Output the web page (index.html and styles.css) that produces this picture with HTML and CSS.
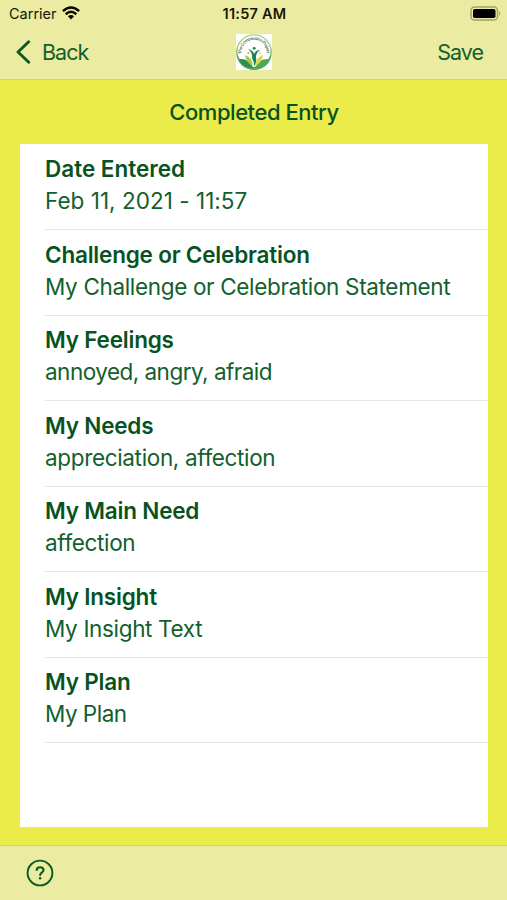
FILE: index.html
```html
<!DOCTYPE html>
<html lang="en">
<head>
<meta charset="utf-8">
<title>Completed Entry</title>
<link rel="stylesheet" href="styles.css">
</head>
<body>
<div class="screen">
  <header class="top">
    <div class="status">
      <div class="carrier"><span>Carrier</span>
        <svg class="wifi" width="18" height="14" viewBox="0 0 18 14"><g fill="none" stroke="#080800" stroke-width="2.5"><path d="M.9 5.1Q9-2.1 17.1 5.1"/><path d="M3.7 8.2Q9 3.4 14.3 8.2"/></g><path d="M5.9 10.2Q9 7.7 12.1 10.2L9 13.5Z" fill="#080800"/></svg>
      </div>
      <div class="time">11:57 AM</div>
      <svg class="battery" width="32" height="15" viewBox="0 0 32 15"><rect x="1" y="1" width="26.5" height="13" rx="3.6" fill="none" stroke="#a3a26e" stroke-width="1.5"/><rect x="3" y="3" width="22.5" height="9" rx="1.8" fill="#000"/><path d="M29 5Q31.5 7.5 29 10Z" fill="#a3a26e"/></svg>
    </div>
    <nav class="nav">
      <div class="back"><svg width="16" height="24" viewBox="0 0 16 24"><path d="M13.7 1.7 3 12l10.7 10.3" fill="none" stroke="#0b5a22" stroke-width="2.9" stroke-linecap="round" stroke-linejoin="round"/></svg><span>Back</span></div>
      <svg class="logo" width="36" height="36" viewBox="0 0 36 36">
        <defs><linearGradient id="ring" x2="0" y2="1"><stop stop-color="#a8d56e"/><stop offset=".6" stop-color="#72b968"/><stop offset="1" stop-color="#18864f"/></linearGradient><path id="arc" d="M5.5 20A12.6 12.6 0 1 1 30.5 20"/></defs>
        <path fill="#fff" d="M0 0h36v36H0z"/>
        <circle cx="18" cy="18" r="17.2" fill="none" stroke="url(#ring)" stroke-width="1.3"/>
        <text class="logo-text"><textPath href="#arc" textLength="42">The Compassion Project</textPath></text>
        <path d="M1 20Q5 31 18 33Q31 31 35 20Q34 35 18 35.5Q2 35 1 20Z" fill="#55a763"/>
        <path d="M3 25Q13 24 17 34Q6 34 3 25Z" fill="#2d8d55"/><path d="M33 25Q23 24 19 34Q30 34 33 25Z" fill="#53a552"/>
        <path d="M9 21Q16 23 17 32Q10 29 9 21Z" fill="#a5ce48"/><path d="M27 21Q20 23 19 32Q26 29 27 21Z" fill="#d6dc50"/>
        <path d="M12 15Q17 16 18 20Q20 16 24 16Q20 19 20 23Q21 29 18 32Q18 27 16 24Q17 19 12 15Z" fill="#178451"/>
        <circle cx="18.2" cy="14.3" r="1.4" fill="#178451"/><circle cx="12.5" cy="19" r="1.1" fill="#8fc454"/><circle cx="24" cy="19" r="1.1" fill="#d6dc50"/>
      </svg>
      <div class="save">Save</div>
    </nav>
  </header>
  <main>
    <h1>Completed Entry</h1>
    <div class="card">
      <section><h2 class="wide">Date Entered</h2><p class="date">Feb 11, 2021 - 11:57</p></section>
      <section><h2>Challenge or Celebration</h2><p>My Challenge or Celebration Statement</p></section>
      <section><h2>My Feelings</h2><p class="tight">annoyed, angry, afraid</p></section>
      <section><h2>My Needs</h2><p>appreciation, affection</p></section>
      <section><h2>My Main Need</h2><p>affection</p></section>
      <section><h2>My Insight</h2><p>My Insight Text</p></section>
      <section><h2>My Plan</h2><p class="tight">My Plan</p></section>
    </div>
  </main>
  <footer><svg width="28" height="28" viewBox="0 0 28 28"><circle cx="14" cy="14" r="12.4" fill="none" stroke="#0b5a22" stroke-width="1.9"/><path d="M10.7 11C10.8 9.1 12 8.3 14 8.3c2 0 3.5 1.1 3.5 2.8 0 2.5-3.3 2.4-3.3 4.8" fill="none" stroke="#0b5a22" stroke-width="2.1" stroke-linecap="round"/><circle cx="14.1" cy="19.2" r="1.3" fill="#0b5a22"/></svg></footer>
</div>
</body>
</html>
```

FILE: styles.css
```css
* { box-sizing: border-box; margin: 0; padding: 0; }
body { font-family: Inter, "Liberation Sans", sans-serif; color: #07531f; }
svg { display: block; flex: none; }
.screen { width: 507px; height: 900px; display: flex; flex-direction: column; background: #ebeb4a; overflow: hidden; }
.top { height: 80px; background: #ebeba2; border-bottom: 1px solid #d3d477; }
.status { height: 27px; display: grid; grid-template-columns: 1fr auto 1fr; align-items: center; padding: 0 5px 0 9px; color: #181808; font-size: 14.5px; }
.carrier { display: flex; align-items: center; gap: 6px; letter-spacing: 0; }
.wifi { margin: -2px 0 0 -1px; }
.time { font-weight: 600; letter-spacing: .25px; padding-right: 2px; }
.battery { justify-self: end; }
.nav { height: 50px; display: grid; grid-template-columns: 1fr 36px 1fr; align-items: center; padding: 0 25px 0 15px; font-size: 21.5px; letter-spacing: -1px; color: #12602d; }
.back { display: flex; align-items: center; gap: 11px; }
.logo { margin-left: 5px; }
.logo-text { font-size: 4.3px; font-weight: 600; fill: #526f65; letter-spacing: 0; }
.save { text-align: right; margin-right: -1px; }
main { height: 766px; padding: 0 19px 0 20px; }
h1 { height: 64px; line-height: 64px; text-align: center; font-size: 22px; font-weight: 500; letter-spacing: -.45px; }
.card { height: 683px; background: #fff; padding: 1px 0 0 25px; }
section { height: 85.5px; padding-top: 8.5px; border-bottom: 1px solid #e6e6e8; line-height: 32px; }
h2 { font-size: 22.5px; font-weight: 600; letter-spacing: -.2px; }
h2.wide { letter-spacing: 0; }
p { font-size: 22.5px; letter-spacing: -.34px; color: #12602d; }
p.date { letter-spacing: .03px; }
p.tight { letter-spacing: -.52px; }
footer { flex: 1; background: #ebeba2; border-top: 1px solid #d3d477; padding: 13px 26px; }
```
